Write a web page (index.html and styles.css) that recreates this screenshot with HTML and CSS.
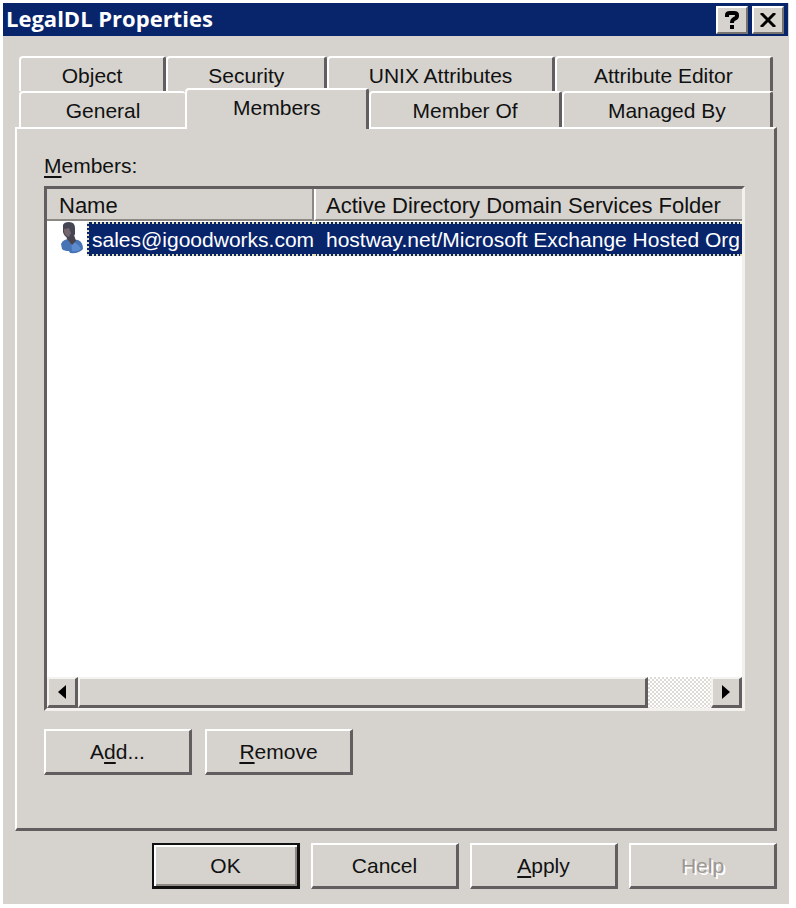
FILE: index.html
```
<!DOCTYPE html>
<html lang="en">
<head>
    <meta charset="UTF-8">
    <meta name="viewport" content="width=device-width, initial-scale=1">
    <title>LegalDL Properties</title>
    <link rel="stylesheet" href="styles.css">
</head>
<body>
    <div class="window">
        <header class="titlebar">
            <h1>LegalDL Properties</h1>
            <button class="title-btn" type="button" aria-label="Help">
                <svg width="14" height="18" viewBox="0 0 14 18"><path d="M2 6V4Q2 2 5 2H9Q12 2 12 4V5Q12 7 9 8Q7 9 7 12M7 14V18" fill="none" stroke="#000" stroke-width="4"/></svg>
            </button>
            <button class="title-btn" type="button" aria-label="Close">
                <svg width="16" height="14" viewBox="0 0 16 14"><path d="M1 0L15 14M15 0L1 14" fill="none" stroke="#000" stroke-width="3"/></svg>
            </button>
        </header>

        <main class="content">
            <div class="tabs" role="tablist">
                <div class="tab-row back">
                    <button class="tab object" type="button" role="tab">Object</button>
                    <button class="tab security" type="button" role="tab">Security</button>
                    <button class="tab unix" type="button" role="tab">UNIX Attributes</button>
                    <button class="tab editor" type="button" role="tab">Attribute Editor</button>
                </div>
                <div class="tab-row">
                    <button class="tab general" type="button" role="tab">General</button>
                    <button class="tab members active" type="button" role="tab" aria-selected="true">Members</button>
                    <button class="tab member-of" type="button" role="tab">Member Of</button>
                    <button class="tab managed" type="button" role="tab">Managed By</button>
                </div>
            </div>

            <section class="panel" role="tabpanel">
                <h2 id="membersLabel"><u>M</u>embers:</h2>
                <div class="list">
                    <div class="list-view">
                        <table aria-labelledby="membersLabel">
                            <thead>
                                <tr><th class="col-name">Name</th><th>Active Directory Domain Services Folder</th></tr>
                            </thead>
                            <tbody>
                                <tr>
                                    <td>
                                        <div class="member">
                                            <svg class="user" width="24" height="32" viewBox="0 0 24 32">
                                                <path d="M0 22Q2 17 9 17L17 18Q22 20 22 27Q18 32 9 31L8 29Q3 29 1 27Z" fill="#4774b5"/>
                                                <path d="M10 19Q17 21 20 27Q16 30 11 29Z" fill="#5c8cce"/>
                                                <path d="M5 13H13L15 19L11 23L6 17Z" fill="#49434c"/>
                                                <path d="M2 3Q3 0 8 0Q14 0 14 6V12Q12 17 8 16Q3 15 2 10Z" fill="#454554"/>
                                                <path d="M3 7L8 6L10 11L8 15Q3 13 3 9Z" fill="#75666b"/>
                                            </svg>
                                            <span class="selected first">sales@igoodworks.com</span>
                                        </div>
                                    </td>
                                    <td><div class="selected">hostway.net/Microsoft Exchange Hosted Org</div></td>
                                </tr>
                            </tbody>
                        </table>
                    </div>
                    <div class="scrollbar">
                        <button class="arrow" type="button" aria-label="Scroll left">
                            <svg width="8" height="14" viewBox="0 0 8 14"><path d="M8 0V14L0 7Z"/></svg>
                        </button>
                        <div class="track"><div class="thumb"></div></div>
                        <button class="arrow" type="button" aria-label="Scroll right">
                            <svg width="8" height="14" viewBox="0 0 8 14"><path d="M0 0V14L8 7Z"/></svg>
                        </button>
                    </div>
                </div>
                <div class="actions">
                    <button class="btn" type="button"><span>A<u>d</u>d...</span></button>
                    <button class="btn" type="button"><span><u>R</u>emove</span></button>
                </div>
            </section>
        </main>

        <footer class="footer">
            <button class="btn default" type="button">OK</button>
            <button class="btn" type="button">Cancel</button>
            <button class="btn" type="button"><span><u>A</u>pply</span></button>
            <button class="btn" type="button" disabled>Help</button>
        </footer>
    </div>
</body>
</html>
```
FILE: styles.css
```
* { box-sizing: border-box; }
body { margin: 0; background: #fff; color: #111; font: 21px/26px "Liberation Sans", Arial, sans-serif; }
button { font: inherit; color: inherit; border-radius: 0; background: #d6d3ce; }
u { text-decoration-thickness: 2px; text-underline-offset: 3px; text-decoration-skip-ink: none; }

.window { display: flex; flex-direction: column; min-height: calc(100vh - 7px); margin: 3px 7px 4px 3px; background: #d6d3ce; }

.titlebar { display: flex; align-items: center; gap: 4px; height: 33px; margin-right: 1px; padding: 0 4px 0 3px; background: #08246b; color: #fff; }
.titlebar h1 { flex: 1; margin: 0; padding-bottom: 3px; font: bold 22px/30px "Open Sans", "DejaVu Sans", sans-serif; }
.title-btn { display: flex; align-items: center; justify-content: center; width: 32px; height: 28px; padding: 0; border: 2px solid; border-color: #fff #77736f #77736f #fff; }

.content { flex: 1; display: flex; flex-direction: column; padding: 20px 12px 0; }
.tabs { padding: 0 4px; }
.tab-row { display: flex; align-items: flex-end; height: 36px; }
.tab-row.back { height: 35px; }
.tab { flex-basis: 0; min-width: 0; height: 100%; padding: 2px 0 0; border: solid; border-width: 2px 3px 0 2px; border-color: #fff #625e60 #fff #fff; border-radius: 4px 3px 0 0; white-space: nowrap; }
.object { flex-grow: 142; }
.security { flex-grow: 156; }
.unix { flex-grow: 222; }
.editor { flex-grow: 213; }
.general { flex-grow: 164; border-right: 0; }
.members { flex-grow: 179; }
.member-of { flex-grow: 187; }
.managed { flex-grow: 206; }
.tab.active { z-index: 1; height: 41px; margin-bottom: -2px; padding-bottom: 6px; }

.panel { flex: 1; display: flex; flex-direction: column; padding: 24px 29px 53px 27px; border: solid; border-width: 2px 3px 3px 2px; border-color: #fff #625e60 #625e60 #fff; }
.panel h2 { margin: 0 0 7px; font-size: 21px; font-weight: normal; line-height: 26px; }

.list { flex: 1; display: flex; flex-direction: column; min-height: 200px; background: #fff; border: solid; border-width: 3px; border-color: #625e60 #f3f1ee #f3f1ee #625e60; }
.list-view { flex: 1; overflow: hidden; }
table { width: 100%; table-layout: fixed; border-collapse: separate; border-spacing: 0; white-space: nowrap; }
th { height: 32px; padding: 4px 12px 0; border-bottom: 2px solid #8c8884; background: #d6d3ce; font-size: 22px; font-weight: normal; line-height: 26px; text-align: left; }
th + th { padding-left: 10px; border-left: 2px solid #fff; }
.col-name { width: 267px; border-right: 2px solid #8c8884; }
td { padding: 1px 0 0; overflow: hidden; }
.member { display: flex; padding-left: 14px; }
.user { flex: none; margin-right: 2px; }
.selected { flex: 1; height: 34px; padding: 3px 0 0 12px; border: dotted #e3e0b8; border-width: 2px 0; background: #08246b; color: #fff; overflow: hidden; }
.selected.first { padding-left: 3px; border-left-width: 2px; }

.scrollbar { display: flex; height: 31px; }
.arrow { display: flex; align-items: center; justify-content: center; width: 31px; padding: 0; }
.arrow, .thumb { border: solid; border-width: 2px 3px 3px 2px; border-color: #f5f3f0 #625e60 #625e60 #f5f3f0; background: #d6d3ce; }
.track { flex: 1; background: repeating-conic-gradient(#fff 0 25%, #dedbd7 0 50%) 0 0 / 4px 4px; }
.thumb { width: 90%; height: 100%; }

.actions { display: flex; gap: 13px; margin-top: 18px; }
.btn { width: 148px; height: 46px; padding: 0; border: solid; border-width: 2px 3px 3px 2px; border-color: #fff #625e60 #625e60 #fff; }
.btn.default { border-color: #111; box-shadow: inset 2px 2px #fff, inset -2px -2px #8c8884; }
.btn:disabled { color: #9c9894; text-shadow: 2px 2px #fff; }
.footer { display: flex; justify-content: flex-end; gap: 11px; padding: 12px 12px 15px; }
```
